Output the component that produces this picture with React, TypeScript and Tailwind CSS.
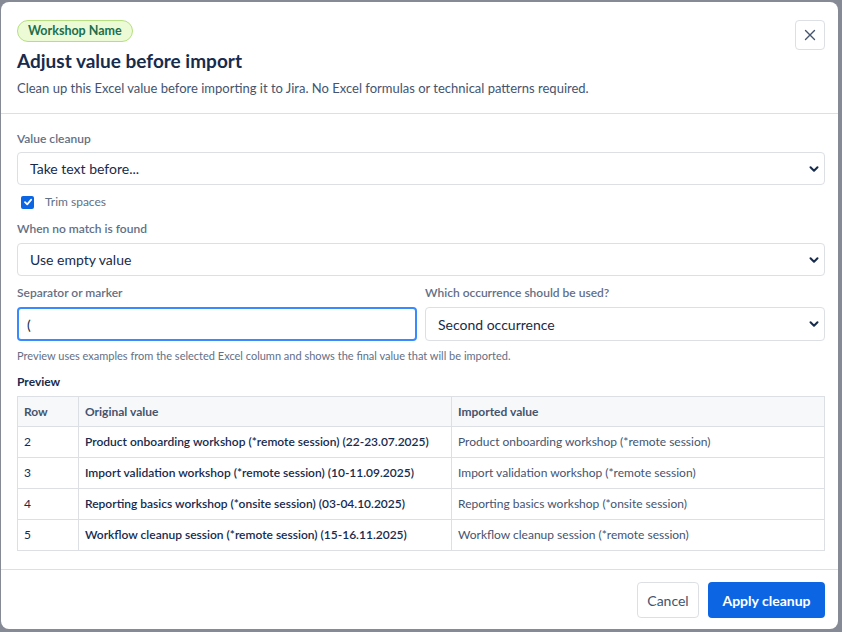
import React, { useState } from 'react';

const FONT = "font-['Lato',_'Noto_Sans',_sans-serif]";

const rows = [
  { row: '2', original: 'Product onboarding workshop (*remote session) (22-23.07.2025)', imported: 'Product onboarding workshop (*remote session)' },
  { row: '3', original: 'Import validation workshop (*remote session) (10-11.09.2025)', imported: 'Import validation workshop (*remote session)' },
  { row: '4', original: 'Reporting basics workshop (*onsite session) (03-04.10.2025)', imported: 'Reporting basics workshop (*onsite session)' },
  { row: '5', original: 'Workflow cleanup session (*remote session) (15-16.11.2025)', imported: 'Workflow cleanup session (*remote session)' },
];

// chevron used on the native-looking selects
function Chevron() {
  return (
    <svg width="12" height="12" viewBox="0 0 12 12" className="absolute right-[4px] top-1/2 -translate-y-1/2 pointer-events-none">
      <path d="M2.5 4.2 L6 7.7 L9.5 4.2" fill="none" stroke="#172b4d" strokeWidth="2" strokeLinecap="round" strokeLinejoin="round" />
    </svg>
  );
}

function SelectBox({ value, tall }: { value: string; tall?: boolean }) {
  return (
    <div className={`relative ${tall ? 'h-[34px]' : 'h-[33px]'} w-full rounded-[4px] border border-[#dcdfe4] bg-white pl-[12px] flex items-center text-[14px] text-[#172b4d]`}>
      {value}
      <Chevron />
    </div>
  );
}

function Label({ children }: { children: React.ReactNode }) {
  return <div className="text-[12px] font-semibold text-[#626f86] leading-[16px]">{children}</div>;
}

export default function App() {
  const [marker, setMarker] = useState('(');
  const [trim, setTrim] = useState(true);

  return (
    <div className={`${FONT} w-[842px] h-[632px] bg-[#858a94] pl-[1px] pt-[2px] overflow-hidden`}>
      <div className="w-[837px] h-[627px] bg-white rounded-[8px] flex flex-col">
        {/* Header */}
        <div className="flex items-start justify-between pl-[16px] pr-[13px] pt-[18px] pb-[16px] border-b border-[#dcdfe4]">
          <div className="flex flex-col">
            <span className="self-start h-[22px] px-[10px] rounded-full border border-[#b6e07f] bg-[#ecfbd6] text-[#216e4e] text-[12.5px] font-bold flex items-center">
              Workshop Name
            </span>
            <h1 className="mt-[7px] text-[19px] leading-[24px] font-bold text-[#172b4d]">Adjust value before import</h1>
            <p className="mt-[6px] text-[13px] leading-[18px] text-[#44546f]">
              Clean up this Excel value before importing it to Jira. No Excel formulas or technical patterns required.
            </p>
          </div>
          <button className="w-[30px] h-[30px] rounded-[4px] border border-[#dcdfe4] bg-white flex items-center justify-center">
            <svg width="12" height="12" viewBox="0 0 12 12">
              <path d="M1.5 1.5 L10.5 10.5 M10.5 1.5 L1.5 10.5" stroke="#44546f" strokeWidth="1.4" strokeLinecap="round" />
            </svg>
          </button>
        </div>

        {/* Body */}
        <div className="flex-1 pl-[16px] pr-[13px] pt-[17px] flex flex-col">
          <Label>Value cleanup</Label>
          <div className="mt-[5px]">
            <SelectBox value="Take text before..." />
          </div>

          <label className="mt-[9px] ml-[4px] h-[16px] flex items-center gap-[11px] text-[12px] text-[#626f86]">
            <span
              onClick={() => setTrim(!trim)}
              className={`w-[13px] h-[13px] rounded-[2px] flex items-center justify-center ${trim ? 'bg-[#0c66e4]' : 'border border-[#8590a2]'}`}
            >
              {trim && (
                <svg width="10" height="10" viewBox="0 0 10 10">
                  <path d="M2 5.2 L4.2 7.3 L8.2 2.6" fill="none" stroke="white" strokeWidth="1.8" strokeLinecap="round" strokeLinejoin="round" />
                </svg>
              )}
            </span>
            Trim spaces
          </label>

          <div className="mt-[11px]">
            <Label>When no match is found</Label>
          </div>
          <div className="mt-[6px]">
            <SelectBox value="Use empty value" />
          </div>

          <div className="mt-[9px] grid grid-cols-2 gap-[8px]">
            <div className="flex flex-col gap-[6px]">
              <Label>Separator or marker</Label>
              <input
                value={marker}
                onChange={(e) => setMarker(e.target.value)}
                className="h-[34px] w-full rounded-[4px] border-2 border-[#388bff] px-[8px] text-[14px] text-[#172b4d] outline-none"
              />
            </div>
            <div className="flex flex-col gap-[6px]">
              <Label>Which occurrence should be used?</Label>
              <SelectBox value="Second occurrence" tall />
            </div>
          </div>

          <p className="mt-[8px] text-[11px] leading-[14px] text-[#626f86]">
            Preview uses examples from the selected Excel column and shows the final value that will be imported.
          </p>

          <div className="mt-[11px] text-[12px] font-bold text-[#172b4d] leading-[16px]">Preview</div>

          <table className="mt-[6px] w-full border-collapse text-[12px] leading-[16px]">
            <thead>
              <tr className="bg-[#f7f8f9] h-[30px]">
                <th className="w-[61px] border border-[#dcdfe4] px-[6px] text-left font-bold text-[#44546f]">Row</th>
                <th className="w-[373px] border border-[#dcdfe4] px-[6px] text-left font-bold text-[#44546f]">Original value</th>
                <th className="border border-[#dcdfe4] px-[6px] text-left font-bold text-[#44546f]">Imported value</th>
              </tr>
            </thead>
            <tbody>
              {rows.map((r) => (
                <tr key={r.row} className="h-[31px]">
                  <td className="border border-[#dcdfe4] px-[6px] text-[#172b4d]">{r.row}</td>
                  <td className="border border-[#dcdfe4] px-[6px] font-semibold text-[#172b4d]">{r.original}</td>
                  <td className="border border-[#dcdfe4] px-[6px] text-[#44546f]">{r.imported}</td>
                </tr>
              ))}
            </tbody>
          </table>
        </div>

        {/* Footer */}
        <div className="border-t border-[#dcdfe4] pr-[13px] pt-[12px] pb-[11px] flex justify-end gap-[9px]">
          <button className="h-[36px] w-[62px] rounded-[4px] border border-[#dcdfe4] bg-white text-[14px] text-[#44546f]">Cancel</button>
          <button className="h-[36px] w-[117px] rounded-[4px] bg-[#0c66e4] text-[14px] font-bold text-white">Apply cleanup</button>
        </div>
      </div>
    </div>
  );
}
